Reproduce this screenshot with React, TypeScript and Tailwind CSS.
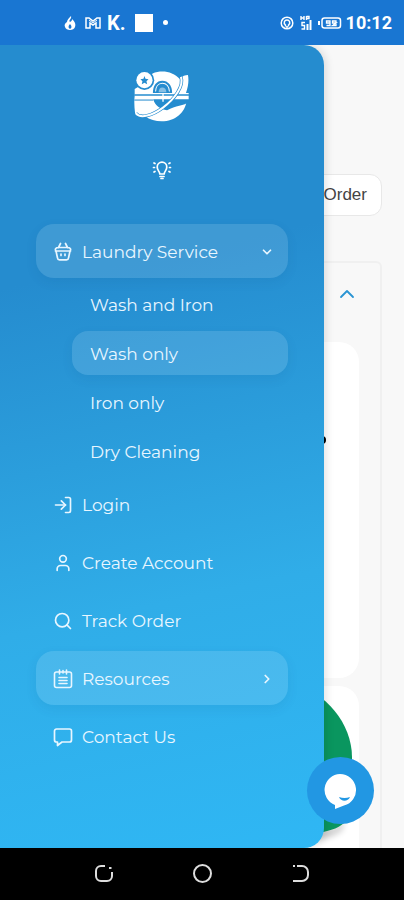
import type { ReactNode } from "react";
import { ChevronDown, ChevronRight, ChevronUp, LogIn, Search, User } from "lucide-react";

const stroke = {
  fill: "none",
  stroke: "currentColor",
  strokeLinecap: "round" as const,
  strokeLinejoin: "round" as const,
};

function BasketIcon() {
  return (
    <svg viewBox="0 0 20 20" className="size-5" {...stroke} strokeWidth={1.7} aria-hidden="true">
      <path d="M2.500 9h15M3 9l1.500 7a2 2 0 0 0 2 1.800h7a2 2 0 0 0 2-1.800L17 9M3 9c-1.500-2 0-3.500 2.500-3.500h9C17 5.500 18.500 7 17 9M7.500 1.500 5.500 5.500M12.500 1.500l2 4M8 12v1.500M12 12v1.500" />
    </svg>
  );
}

function NotesIcon() {
  return (
    <svg viewBox="0 0 20 20" className="size-5" {...stroke} strokeWidth={1.6} aria-hidden="true">
      <rect x="1.500" y="3" width="17" height="15.500" rx="2" />
      <path d="M6.500 1v4M13.500 1v4M10 1.500V4M6 8.500h8M6 11.500h8M6 14.500h8" />
    </svg>
  );
}

function MessageIcon() {
  return (
    <svg viewBox="0 0 20 20" className="size-5" {...stroke} strokeWidth={1.7} aria-hidden="true">
      <path d="M3.500 2h13a2 2 0 0 1 2 2v9a2 2 0 0 1-2 2H9l-4.500 3.500V15h-1a2 2 0 0 1-2-2V4a2 2 0 0 1 2-2z" />
    </svg>
  );
}

function BulbIcon() {
  return (
    <svg viewBox="0 0 20 20" className="size-5" {...stroke} strokeWidth={1.7} aria-hidden="true">
      <path d="M7.800 14c0-2.500-2.600-3.500-2.600-7a4.800 4.800 0 0 1 9.600 0c0 3.500-2.600 4.500-2.600 7zM8 16.500h4M9 18.500h2M2 3l1 .6M1.500 7.500h1M2 12l1-.6M18 3l-1 .6M18.500 7.500h-1M18 12l-1-.6" />
    </svg>
  );
}

function Logo() {
  return (
    <svg viewBox="13 14 166 154" className="h-[52px] w-14" role="img" aria-label="Logo">
      <path d="M68 24c28-12 62-5 80 16 9-8 17-11 25-11 3 16 1 34-6 53h8v22h-6c-4 36-34 62-74 62-18 0-36-5-49-15-14 4-27 1-30-10-2-18-3-34-1-50V70l10-6z" fill="white" />
      <path d="M69 82c0-22 11-36 28-36s29 14 29 36z" fill="#258ccf" />
      <path d="M77 78c0-15 8-25 20-25s21 10 21 25" fill="none" stroke="white" strokeWidth="3" />
      <path d="M86 80c0-9 4-14 11-14s12 5 12 14z" fill="white" opacity=".45" />
      <path d="M14 88h162" stroke="#258ccf" strokeWidth="4" />
      <path d="M14 103h56" stroke="#258ccf" strokeWidth="3" />
      <path d="M70 101h107v6c-16 14-41 11-66 26-20-2-36-14-41-32z" fill="#258ccf" />
      <path d="M99 82v26" stroke="white" strokeWidth="4" />
      <path d="M152 34c10 26-18 66-54 92-30 22-66 34-80 16" fill="none" stroke="#258ccf" strokeWidth="10" />
      <path d="M152 34c10 26-18 66-54 92-30 22-66 34-80 16" fill="none" stroke="white" strokeWidth="6" />
      <circle cx="44" cy="44" r="29" fill="#258ccf" />
      <circle cx="44" cy="44" r="24" fill="white" />
      <path d="m44 32 3 8 9 1-6 6 2 9-8-4-8 4 2-9-6-6 9-1z" fill="#258ccf" />
    </svg>
  );
}

function StatusBar() {
  return (
    <header className="flex h-[45px] shrink-0 items-center justify-between bg-[#1976d2] pr-3 pl-[63px] text-white">
      <div className="flex items-center gap-2">
        <svg viewBox="0 0 14 16" className="h-4 w-3.5" aria-hidden="true">
          <path d="M8 1c1 3-3 4-1 6 2-1 2-2 2-3 3 3 4 5 3 8-1 4-9 4-10 0-1-2 0-4 2-5 0-2 2-4 4-6z" fill="white" />
          <path d="M7 9c2 2 2 4 0 5-2-1-2-3 0-5z" fill="#1976d2" />
        </svg>
        <svg viewBox="0 0 16 14" className="h-3.5 w-4" aria-hidden="true">
          <path d="M1 2h3l4 3 4-3h3v10h-4V7L8 9 5 7v5H1z" fill="none" stroke="white" strokeWidth="1.500" />
          <path d="m4 4 4 3 4-3" fill="none" stroke="white" />
        </svg>
        <span className="-mx-0.5 w-4 text-xl leading-5 font-bold">K.</span>
        <span className="ml-1.5 size-[18px] bg-white" />
        <span className="ml-0.5 size-[5px] rounded-full bg-white" />
      </div>
      <div className="flex items-center gap-1">
        <svg viewBox="0 0 14 14" className="size-3.5" fill="none" stroke="white" strokeWidth="1.500" aria-hidden="true">
          <circle cx="7" cy="7" r="5.800" />
          <path d="M5.500 10.500V9C3 7 4.500 4 7 4s4 3 1.500 5v1.500M7 10v2" />
        </svg>
        <svg viewBox="0 0 16 16" className="size-4" fill="none" stroke="white" aria-hidden="true">
          <path d="M3 1v4M3 3h3M6 1v4M8.500 1v4M8.500 1.500H11v2H8.500M7 7.500H4v3h2.500V14H3.500" strokeWidth="1.400" />
          <path d="M9.500 9v6M12.500 5v10" strokeWidth="2" />
        </svg>
        <svg viewBox="0 0 24 12" className="h-3 w-6" fill="none" stroke="white" aria-hidden="true">
          <path d="M1 4v4" strokeWidth="2" />
          <rect x="4" y="1" width="18.500" height="10" rx="2.500" strokeWidth="1.500" />
          <path d="M12 6H8.500V4H12v4.500H8.500M18 6h-3.500V4H18v4.500h-3.500z" strokeWidth="1.300" />
        </svg>
        <time className="text-lg leading-6 font-bold">10:12</time>
      </div>
    </header>
  );
}

type MenuItemProps = { icon: ReactNode; label: string; trailing?: ReactNode };

function MenuItem({ icon, label, trailing }: MenuItemProps) {
  const base = "flex h-[54px] w-full items-center gap-[9px] rounded-[18px] pt-0.5 pr-3.5 pl-[17px] text-left";
  if (trailing) {
    return (
      <button type="button" className={`${base} bg-white/12 shadow-[0_4px_12px_rgba(0,60,120,0.08)]`}>
        {icon}
        <span className="flex-1">{label}</span>
        {trailing}
      </button>
    );
  }
  return (
    <a href="#" className={base}>
      {icon}
      <span>{label}</span>
    </a>
  );
}

const services = ["Wash and Iron", "Wash only", "Iron only", "Dry Cleaning"];

function Drawer() {
  return (
    <aside className="absolute inset-y-0 left-0 w-[324px] rounded-r-[20px] bg-[linear-gradient(168deg,#258ccf_28%,#2b9edc_50%,#30ade8_68%,#2fb7f4_100%)] px-9 pt-[25px] text-white shadow-[2px_0_8px_rgba(0,0,0,0.12)]">
      <div className="flex flex-col items-center gap-[38px]">
        <Logo />
        <button type="button" aria-label="Toggle theme">
          <BulbIcon />
        </button>
      </div>
      <nav className="mt-11 flex flex-col gap-1 font-['Montserrat','Inter',sans-serif] text-[17px] leading-6 text-[#e8f6ff]">
        <MenuItem icon={<BasketIcon />} label="Laundry Service" trailing={<ChevronDown size={14} strokeWidth={3} />} />
        <div className="flex flex-col gap-[5px] pl-9">
          {services.map((name) => (
            <a
              key={name}
              href="#"
              className={`flex h-11 items-center rounded-2xl px-[18px] pt-0.5 ${
                name === "Wash only" ? "bg-white/12 shadow-[0_4px_12px_rgba(0,60,120,0.08)]" : ""
              }`}
            >
              {name}
            </a>
          ))}
        </div>
        <MenuItem icon={<LogIn size={20} />} label="Login" />
        <MenuItem icon={<User size={20} />} label="Create Account" />
        <MenuItem icon={<Search size={20} />} label="Track Order" />
        <MenuItem icon={<NotesIcon />} label="Resources" trailing={<ChevronRight size={14} strokeWidth={3} />} />
        <MenuItem icon={<MessageIcon />} label="Contact Us" />
      </nav>
    </aside>
  );
}

function OrderPage() {
  return (
    <div className="flex flex-1 flex-col pt-[129px] pr-[22px] pl-6">
      <button
        type="button"
        className="h-[42px] w-32 self-end rounded-xl border border-[#e8e8e8] bg-white pr-3.5 text-right font-['Liberation_Sans',sans-serif] text-[17px] text-[#444]"
      >
        Order
      </button>
      <section className="mt-[45px] flex flex-1 flex-col rounded-t-md border-2 border-b-0 border-[#f0f0f0] px-[21px]">
        <button type="button" aria-label="Collapse" className="mt-[19px] self-end text-[#2a94d3]">
          <ChevronUp size={24} strokeWidth={1.8} />
        </button>
        <div className="mt-9 h-[336px] rounded-[20px] bg-white">
          <span className="mt-[94px] mr-[33px] ml-auto block h-2 w-3 rounded-full bg-black" />
        </div>
        <div className="mt-2 flex flex-1 justify-end rounded-t-[20px] bg-white pr-1.5">
          <svg viewBox="0 0 60 160" className="h-40 w-[60px]" aria-hidden="true">
            <defs>
              <filter id="soft" x="-20%" y="-20%" width="140%" height="140%">
                <feGaussianBlur stdDeviation="3" />
              </filter>
            </defs>
            <path d="M0 142h42l8-9v10c-10 10-27 12-50 12z" fill="#000" opacity=".2" filter="url(#soft)" />
            <path d="M0 0c32 4 59 38 59 71v52c-3 18-22 25-59 26z" fill="#0a965f" />
          </svg>
        </div>
      </section>
    </div>
  );
}

export default function App() {
  return (
    <div className="flex min-h-screen flex-col bg-[#f8f8f8] font-['Roboto',sans-serif]">
      <StatusBar />
      <main className="relative flex flex-1 flex-col overflow-hidden">
        <OrderPage />
        <Drawer />
        <button
          type="button"
          aria-label="Open chat"
          className="absolute right-[30px] bottom-6 flex size-[67px] items-center justify-center rounded-full bg-[#2297e3] text-white"
        >
          <svg viewBox="0 0 34 36" className="h-9 w-[34px]" aria-hidden="true">
            <path d="M16 1a16 16 0 0 1 4 31.500L11 36v-4A16 16 0 0 1 16 1z" fill="currentColor" />
            <path d="M15 24q5.500 2 11 0c-2 5-9 5-11 0z" fill="#2297e3" />
          </svg>
        </button>
      </main>
      <footer className="flex h-[52px] shrink-0 items-center justify-between bg-black px-[92px] text-[#ddd]">
        <button type="button" aria-label="Recent apps">
          <svg viewBox="0 0 22 22" className="size-[22px]" fill="none" stroke="currentColor" strokeWidth="2" aria-hidden="true">
            <path d="M13 3H9a5 5 0 0 0-5 5v5a5 5 0 0 0 5 5h6a5 5 0 0 0 5-5V9M17 5h2.500" />
          </svg>
        </button>
        <button type="button" aria-label="Home">
          <svg viewBox="0 0 22 22" className="size-[22px]" fill="none" stroke="currentColor" strokeWidth="2" aria-hidden="true">
            <circle cx="11.500" cy="10.500" r="8.500" />
          </svg>
        </button>
        <button type="button" aria-label="Back">
          <svg viewBox="0 0 22 22" className="size-[22px]" fill="none" stroke="currentColor" strokeWidth="2" aria-hidden="true">
            <path d="M7 3h5a6 6 0 0 1 6 6v3a6 6 0 0 1-6 6H3M3 3h2" />
          </svg>
        </button>
      </footer>
    </div>
  );
}
